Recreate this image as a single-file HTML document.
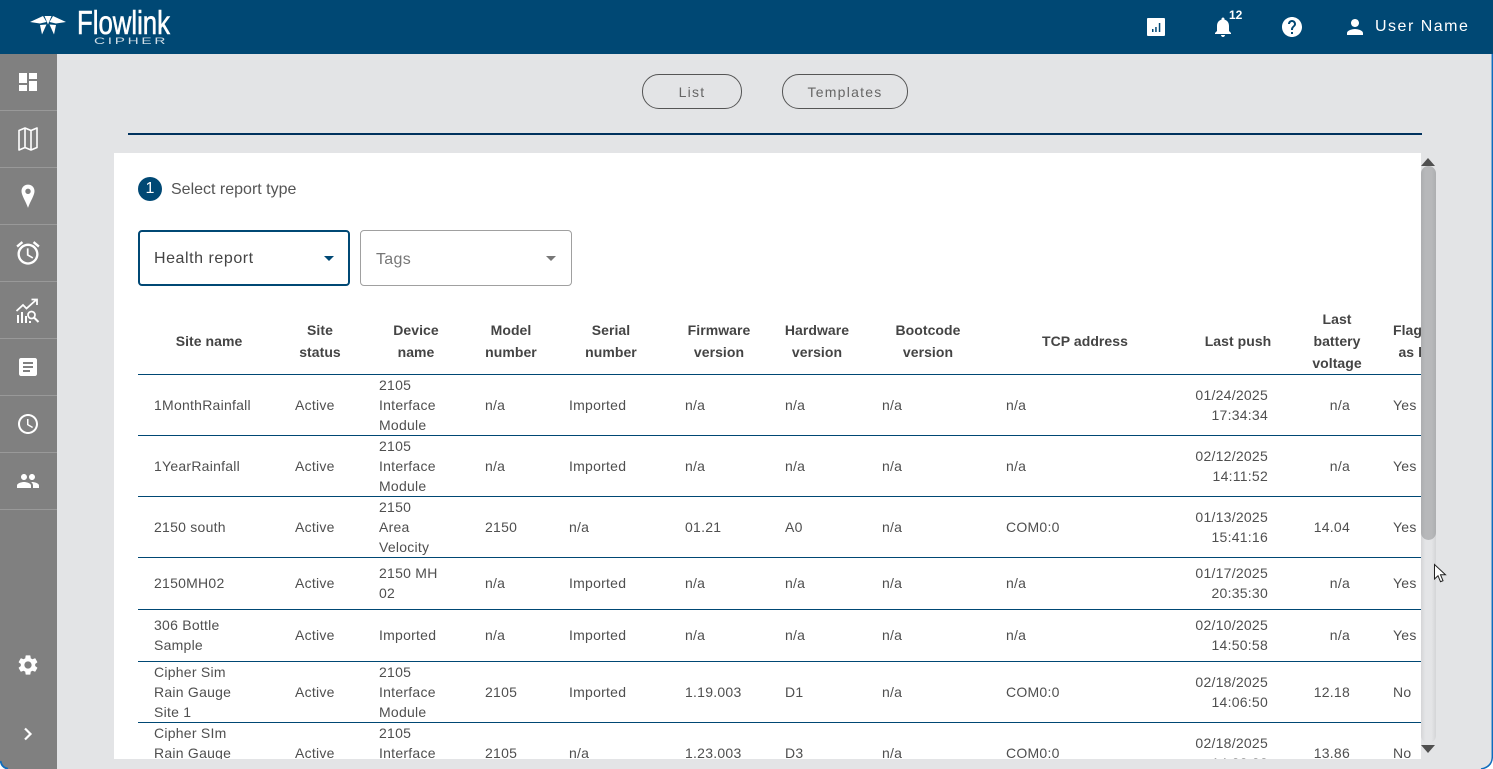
<!DOCTYPE html>
<html lang="en">
<head>
<meta charset="utf-8">
<title>Flowlink Cipher</title>
<style>
html,body{margin:0;padding:0;width:1493px;height:769px;overflow:hidden;background:#e3e4e6;font-family:"Liberation Sans",sans-serif;color:#4f4f4f}
*{box-sizing:border-box}
.a{position:absolute}
#top{left:0;top:0;width:1493px;height:54px;background:#004874}
#side{left:0;top:54px;width:57px;height:715px;background:#808080}
.sep{position:absolute;left:0;width:57px;height:1px;background:#999}
.ic{position:absolute;fill:#fff}
.btn{position:absolute;top:74px;height:35px;border:1px solid #555;border-radius:17px;text-align:center;font-size:14px;line-height:34px;letter-spacing:1.25px;color:#666}
#clip{left:114px;top:153px;width:1307px;height:606px;overflow:hidden;background:#fff}
#in{left:-114px;top:-153px;width:1535px;height:759px}
.h{position:absolute;width:130px;text-align:center;font-size:14px;font-weight:bold;line-height:22px;letter-spacing:.05px;color:#444}
.r{position:absolute;left:138px;width:1400px;display:flex;align-items:center;padding-left:16px;font-size:14px;line-height:20px;letter-spacing:.25px;color:#4f4f4f;border-bottom:1px solid #004874}
.r div{flex:none}
.c1{width:141px}.c2{width:84px}.c3{width:106px}.c4{width:84px}.c5{width:116px}.c6{width:100px}.c7{width:97px}.c8{width:124px}.c9{width:162px}
.c10{width:100px;text-align:right}.c11{width:82px;text-align:right}.c12{margin-left:43px;width:60px}
.sel{position:absolute;top:230px;width:212px;height:56px;background:#fff;border-radius:4px}
</style>
</head>
<body>

<div class="a" id="top"></div>

<!-- logo -->
<svg class="a" style="left:29px;top:14px" width="38" height="22" viewBox="0 0 38 22" fill="#fff">
<path d="M1 8 14 2 17.500 8 11 9.500Z"/>
<path d="M37 8 24 2 20.500 8 27 9.500Z"/>
<path d="M15.500 2H22.500L19 10.500Z"/>
<path d="M11 11 17.500 10.500 13 20.500Z"/>
<path d="M27 11 20.500 10.500 25 20.500Z"/>
</svg>
<div class="a" style="left:77px;top:5px;font-size:33px;line-height:36px;color:#fff;-webkit-text-stroke:.6px #fff;transform-origin:0 0;transform:scaleX(.78);white-space:nowrap">Flowlink</div>
<div class="a" style="left:94px;top:36px;font-size:9px;line-height:10px;color:#cfdde6;letter-spacing:1.6px;transform-origin:0 0;transform:scaleX(1.7);white-space:nowrap">CIPHER</div>

<!-- top icons -->
<svg class="ic" style="left:1144px;top:15px" width="24" height="24" viewBox="0 0 24 24"><path fill-rule="evenodd" d="M3 4c0-.6.4-1 1-1h16c.6 0 1 .4 1 1v16c0 .6-.4 1-1 1H4c-.6 0-1-.4-1-1zM8 14v3h1.500v-3zM11.200 12v5h1.500v-5zM14.800 8v9h1.500V8z"/></svg>
<svg class="ic" style="left:1211px;top:15px" width="24" height="24" viewBox="0 0 24 24"><path d="M12 22c1.100 0 2-.9 2-2h-4c0 1.100.89 2 2 2zm6-6v-5c0-3.070-1.640-5.640-4.500-6.320V4c0-.83-.67-1.500-1.500-1.500s-1.500.67-1.500 1.500v.68C7.630 5.360 6 7.920 6 11v5l-2 2v1h16v-1l-2-2z"/></svg>
<div class="a" style="left:1229px;top:8px;font-size:12px;line-height:14px;font-weight:bold;color:#fff">12</div>
<svg class="ic" style="left:1280px;top:15px" width="24" height="24" viewBox="0 0 24 24"><path d="M12 2C6.480 2 2 6.480 2 12s4.480 10 10 10 10-4.480 10-10S17.520 2 12 2zm1 17h-2v-2h2v2zm2.070-7.750l-.9.92C13.450 12.900 13 13.500 13 15h-2v-.5c0-1.100.45-2.100 1.170-2.830l1.240-1.260c.37-.36.59-.86.59-1.410 0-1.100-.9-2-2-2s-2 .9-2 2H8c0-2.210 1.790-4 4-4s4 1.790 4 4c0 .88-.36 1.680-.93 2.250z"/></svg>
<svg class="ic" style="left:1343px;top:15px" width="24" height="24" viewBox="0 0 24 24"><path d="M12 12c2.210 0 4-1.790 4-4s-1.790-4-4-4-4 1.790-4 4 1.790 4 4 4zm0 2c-2.670 0-8 1.340-8 4v2h16v-2c0-2.660-5.330-4-8-4z"/></svg>
<div class="a" style="left:1375px;top:17px;font-size:16px;line-height:19px;letter-spacing:1.5px;color:#fff;white-space:nowrap">User Name</div>

<!-- sidebar -->
<div class="a" id="side">
<div class="sep" style="top:56px"></div>
<div class="sep" style="top:113px"></div>
<div class="sep" style="top:170px"></div>
<div class="sep" style="top:227px"></div>
<div class="sep" style="top:284px"></div>
<div class="sep" style="top:341px"></div>
<div class="sep" style="top:398px"></div>
<div class="sep" style="top:455px"></div>
</div>
<svg class="ic" style="left:16px;top:70px" width="24" height="24" viewBox="0 0 24 24"><path d="M3 13h8V3H3v10zm0 8h8v-6H3v6zm10 0h8V11h-8v10zm0-18v6h8V3h-8z"/></svg>
<svg class="a" style="left:16px;top:127px" width="24" height="24" viewBox="0 0 24 24" fill="none" stroke="#fff" stroke-width="1.600" stroke-linejoin="round"><path d="M3 3.500 9 1 15 3.500 21 1V20.500L15 23 9 20.500 3 23zM9 1V20.500M15 3.500V23"/></svg>
<svg class="ic" style="left:15px;top:183px" width="26" height="26" viewBox="0 0 24 24"><path fill-rule="evenodd" d="M12 1.500C8.400 1.500 6 4.200 6 7.500 6 11.500 10 17 12 23c2-6 6-11.500 6-15.500 0-3.300-2.400-6-6-6zm0 3.700a2.500 2.500 0 1 1 0 5 2.500 2.500 0 0 1 0-5z"/></svg>
<svg class="ic" style="left:14px;top:239px" width="28" height="28" viewBox="0 0 24 24"><path d="M22 5.720l-4.600-3.860-1.290 1.530 4.600 3.860L22 5.720zM7.880 3.390L6.600 1.860 2 5.710l1.290 1.530 4.590-3.850zM12.500 8H11v6l4.750 2.850.75-1.230-4-2.370V8zM12 4c-4.970 0-9 4.030-9 9s4.020 9 9 9c4.970 0 9-4.030 9-9s-4.030-9-9-9zm0 16c-3.870 0-7-3.130-7-7s3.130-7 7-7 7 3.130 7 7-3.130 7-7 7z"/></svg>
<svg class="a" style="left:15px;top:297px" width="27" height="27" viewBox="0 0 27 27" fill="none" stroke="#fff">
<path stroke-width="1.800" d="M1.500 14 8 8l3.500 3.500L21 3"/><path stroke-width="1.800" d="M16.500 2.500H22V8"/>
<path stroke-width="2" d="M3 26V18M7 26V15M11 26V19M15 26V24"/>
<circle cx="16.500" cy="18" r="3.500" stroke-width="1.700"/><path stroke-width="2" d="m19 20.500 4.500 4.500"/>
</svg>
<svg class="ic" style="left:16px;top:355px" width="24" height="24" viewBox="0 0 24 24"><path d="M19 3H5c-1.100 0-2 .9-2 2v14c0 1.100.9 2 2 2h14c1.100 0 2-.9 2-2V5c0-1.100-.9-2-2-2zm-5 14H7v-2h7v2zm3-4H7v-2h10v2zm0-4H7V7h10v2z"/></svg>
<svg class="ic" style="left:16px;top:412px" width="24" height="24" viewBox="0 0 24 24"><path d="M11.990 2C6.470 2 2 6.480 2 12s4.470 10 9.990 10C17.520 22 22 17.520 22 12S17.520 2 11.990 2zM12 20c-4.420 0-8-3.580-8-8s3.580-8 8-8 8 3.580 8 8-3.580 8-8 8zm.5-13H11v6l5.250 3.150.75-1.230-4.500-2.670z"/></svg>
<svg class="ic" style="left:16px;top:469px" width="24" height="24" viewBox="0 0 24 24"><path d="M16 11c1.660 0 2.990-1.340 2.990-3S17.660 5 16 5c-1.660 0-3 1.340-3 3s1.340 3 3 3zm-8 0c1.660 0 2.990-1.340 2.990-3S9.660 5 8 5C6.340 5 5 6.340 5 8s1.340 3 3 3zm0 2c-2.330 0-7 1.170-7 3.500V19h14v-2.500c0-2.330-4.670-3.500-7-3.500zm8 0c-.29 0-.62.02-.97.05 1.160.84 1.970 1.970 1.970 3.450V19h6v-2.500c0-2.330-4.670-3.500-7-3.500z"/></svg>
<svg class="ic" style="left:16px;top:653px" width="24" height="24" viewBox="0 0 24 24"><path d="M19.140 12.940c.04-.3.06-.61.06-.94 0-.32-.02-.64-.07-.94l2.030-1.580c.18-.14.23-.41.12-.61l-1.920-3.320c-.12-.22-.37-.29-.59-.22l-2.390.96c-.5-.38-1.030-.7-1.620-.94l-.36-2.540c-.04-.24-.24-.41-.48-.41h-3.840c-.24 0-.43.17-.47.41l-.36 2.540c-.59.24-1.130.57-1.620.94l-2.390-.96c-.22-.08-.47 0-.59.22L2.740 8.870c-.12.21-.08.47.12.61l2.030 1.580c-.05.3-.09.63-.09.94s.02.64.07.94l-2.030 1.580c-.18.14-.23.41-.12.61l1.920 3.320c.12.22.37.29.59.22l2.390-.96c.5.38 1.030.7 1.620.94l.36 2.540c.05.24.24.41.48.41h3.840c.24 0 .44-.17.47-.41l.36-2.540c.59-.24 1.130-.56 1.620-.94l2.390.96c.22.08.47 0 .59-.22l1.920-3.320c.12-.22.07-.47-.12-.61l-2.010-1.580zM12 15.600c-1.980 0-3.600-1.620-3.600-3.600s1.620-3.600 3.600-3.600 3.600 1.620 3.600 3.600-1.620 3.600-3.600 3.600z"/></svg>
<svg class="a" style="left:16px;top:722px" width="24" height="24" viewBox="0 0 24 24" fill="none" stroke="#fff" stroke-width="2.200"><path d="M9 6.500 14.500 12 9 17.500"/></svg>

<!-- tabs -->
<div class="btn" style="left:642px;width:100px">List</div>
<div class="btn" style="left:782px;width:126px">Templates</div>
<div class="a" style="left:128px;top:133px;width:1294px;height:2px;background:#00325e"></div>

<!-- panel -->
<div class="a" id="clip"><div class="a" id="in">
<div class="a" style="left:138px;top:177px;width:24px;height:24px;border-radius:50%;background:#004874;color:#fff;text-align:center;font-size:16px;line-height:24px">1</div>
<div class="a" style="left:171px;top:180px;font-size:16px;line-height:19px;color:#555;white-space:nowrap">Select report type</div>

<div class="sel" style="left:138px;border:2px solid #004874"></div>
<div class="a" style="left:154px;top:249px;font-size:16px;line-height:19px;letter-spacing:.55px;color:#444;white-space:nowrap">Health report</div>
<div class="a" style="left:324px;top:256px;width:0;height:0;border-left:5px solid transparent;border-right:5px solid transparent;border-top:5px solid #004874"></div>
<div class="sel" style="left:360px;border:1px solid #a0a0a0"></div>
<div class="a" style="left:376px;top:250px;font-size:16px;line-height:19px;letter-spacing:.3px;color:#777">Tags</div>
<div class="a" style="left:546px;top:256px;width:0;height:0;border-left:5px solid transparent;border-right:5px solid transparent;border-top:5px solid #777"></div>

<div class="h" style="left:144px;top:330px">Site name</div>
<div class="h" style="left:255px;top:319px">Site<br>status</div>
<div class="h" style="left:351px;top:319px">Device<br>name</div>
<div class="h" style="left:446px;top:319px">Model<br>number</div>
<div class="h" style="left:546px;top:319px">Serial<br>number</div>
<div class="h" style="left:654px;top:319px">Firmware<br>version</div>
<div class="h" style="left:752px;top:319px">Hardware<br>version</div>
<div class="h" style="left:863px;top:319px">Bootcode<br>version</div>
<div class="h" style="left:1020px;top:330px">TCP address</div>
<div class="h" style="left:1173px;top:330px">Last push</div>
<div class="h" style="left:1272px;top:308px">Last<br>battery<br>voltage</div>
<div class="h" style="left:1355px;top:319px">Flagged<br>as low</div>
<div class="a" style="left:138px;top:374px;width:1300px;height:1px;background:#004874"></div>

<div class="r" style="top:375px;height:61px"><div class="c1">1MonthRainfall</div><div class="c2">Active</div><div class="c3">2105<br>Interface<br>Module</div><div class="c4">n/a</div><div class="c5">Imported</div><div class="c6">n/a</div><div class="c7">n/a</div><div class="c8">n/a</div><div class="c9">n/a</div><div class="c10">01/24/2025<br>17:34:34</div><div class="c11">n/a</div><div class="c12">Yes</div></div>
<div class="r" style="top:436px;height:61px"><div class="c1">1YearRainfall</div><div class="c2">Active</div><div class="c3">2105<br>Interface<br>Module</div><div class="c4">n/a</div><div class="c5">Imported</div><div class="c6">n/a</div><div class="c7">n/a</div><div class="c8">n/a</div><div class="c9">n/a</div><div class="c10">02/12/2025<br>14:11:52</div><div class="c11">n/a</div><div class="c12">Yes</div></div>
<div class="r" style="top:497px;height:61px"><div class="c1">2150 south</div><div class="c2">Active</div><div class="c3">2150<br>Area<br>Velocity</div><div class="c4">2150</div><div class="c5">n/a</div><div class="c6">01.21</div><div class="c7">A0</div><div class="c8">n/a</div><div class="c9">COM0:0</div><div class="c10">01/13/2025<br>15:41:16</div><div class="c11">14.04</div><div class="c12">Yes</div></div>
<div class="r" style="top:557px;height:53px"><div class="c1">2150MH02</div><div class="c2">Active</div><div class="c3">2150 MH<br>02</div><div class="c4">n/a</div><div class="c5">Imported</div><div class="c6">n/a</div><div class="c7">n/a</div><div class="c8">n/a</div><div class="c9">n/a</div><div class="c10">01/17/2025<br>20:35:30</div><div class="c11">n/a</div><div class="c12">Yes</div></div>
<div class="r" style="top:609px;height:53px"><div class="c1">306 Bottle<br>Sample</div><div class="c2">Active</div><div class="c3">Imported</div><div class="c4">n/a</div><div class="c5">Imported</div><div class="c6">n/a</div><div class="c7">n/a</div><div class="c8">n/a</div><div class="c9">n/a</div><div class="c10">02/10/2025<br>14:50:58</div><div class="c11">n/a</div><div class="c12">Yes</div></div>
<div class="r" style="top:662px;height:61px"><div class="c1">Cipher Sim<br>Rain Gauge<br>Site 1</div><div class="c2">Active</div><div class="c3">2105<br>Interface<br>Module</div><div class="c4">2105</div><div class="c5">Imported</div><div class="c6">1.19.003</div><div class="c7">D1</div><div class="c8">n/a</div><div class="c9">COM0:0</div><div class="c10">02/18/2025<br>14:06:50</div><div class="c11">12.18</div><div class="c12">No</div></div>
<div class="r" style="top:723px;height:61px"><div class="c1">Cipher SIm<br>Rain Gauge<br>Site 2</div><div class="c2">Active</div><div class="c3">2105<br>Interface<br>Module</div><div class="c4">2105</div><div class="c5">n/a</div><div class="c6">1.23.003</div><div class="c7">D3</div><div class="c8">n/a</div><div class="c9">COM0:0</div><div class="c10">02/18/2025<br>14:33:33</div><div class="c11">13.86</div><div class="c12">No</div></div>
</div></div>

<!-- scrollbar -->
<div class="a" style="left:1421px;top:166px;width:15px;height:577px;border-radius:8px;background:linear-gradient(90deg,#d4d5d7,#e4e5e7 30%,#e4e5e7 70%,#d4d5d7)"></div>
<div class="a" style="left:1421px;top:166px;width:15px;height:374px;border-radius:8px;background:linear-gradient(90deg,#adaeb0,#b7b8ba 30%,#b7b8ba 70%,#adaeb0)"></div>
<div class="a" style="left:1421px;top:158px;width:0;height:0;border-left:7.500px solid transparent;border-right:7.500px solid transparent;border-bottom:8px solid #505050"></div>
<div class="a" style="left:1421px;top:745px;width:0;height:0;border-left:7.500px solid transparent;border-right:7.500px solid transparent;border-top:8px solid #505050"></div>

<!-- cursor -->
<svg class="a" style="left:1433px;top:563px" width="16" height="22" viewBox="0 0 16 22"><path fill="#fff" stroke="#222" stroke-width="1" d="M1.500 1.500V16l3.500-3.300 2.500 6 2.500-1-2.500-6h5z"/></svg>

<!-- window edge -->
<svg class="a" style="left:0;top:0" width="1493" height="769" viewBox="0 0 1493 769" fill="none">
<path fill="#fff" d="M1493 757V769H1481Q1492 768 1493 757Z"/>
<path fill="#fff" d="M0 761V769H8Q1 768 0 761Z"/>
<path stroke="#0f6cbd" stroke-width="1.500" d="M1492.300 54V757Q1492 767 1481 769"/>
<path stroke="#0f6cbd" stroke-width="1.800" d="M.6 761Q1.500 767.500 8 768.800"/>
</svg>
</body>
</html>
